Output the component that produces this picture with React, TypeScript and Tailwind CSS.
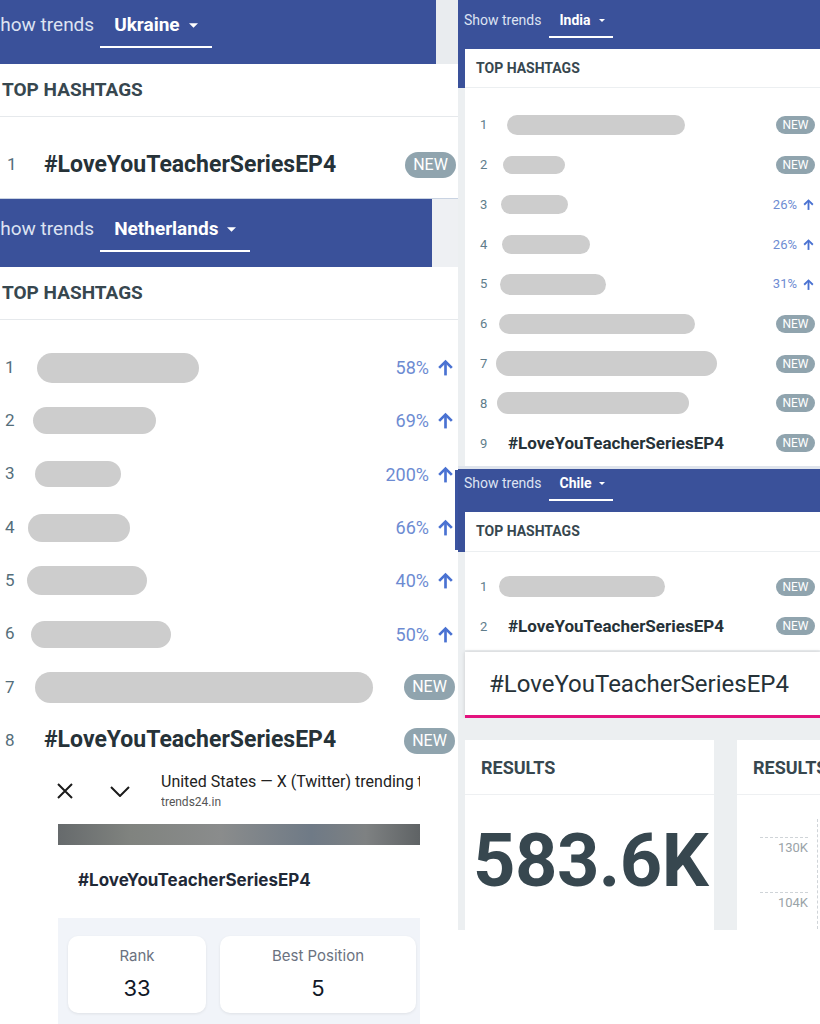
import { ReactNode } from 'react'

const nlRows = [
  { pill: 'w-[162px] h-[30px] ml-[13px]', pct: '58%' },
  { pill: 'w-[123px] h-[27px] ml-[9px]', pct: '69%' },
  { pill: 'w-[86px] h-[26px] ml-[11px]', pct: '200%' },
  { pill: 'w-[102px] h-[28px] ml-[4px]', pct: '66%' },
  { pill: 'w-[120px] h-[29px] ml-[3px]', pct: '40%' },
  { pill: 'w-[140px] h-[27px] ml-[7px]', pct: '50%' },
  { pill: 'w-[338px] h-[31px] ml-[11px]', pct: '' },
]

const indiaRows = [
  { pill: 'w-[178px] h-[20px] ml-[11px]', pct: '' },
  { pill: 'w-[62px] h-[18px] ml-[7px]', pct: '' },
  { pill: 'w-[67px] h-[19px] ml-[5px]', pct: '26%' },
  { pill: 'w-[88px] h-[19px] ml-[6px]', pct: '26%' },
  { pill: 'w-[106px] h-[21px] ml-[4px]', pct: '31%' },
  { pill: 'w-[196px] h-[20px] ml-[3px]', pct: '' },
  { pill: 'w-[221px] h-[25px] ml-[0px]', pct: '' },
  { pill: 'w-[192px] h-[22px] ml-[1px]', pct: '' },
]

function Caret({ className }: { className: string }) {
  return (
    <svg className={className} viewBox="0 0 10 5" fill="currentColor">
      <path d="M0 0h10L5 5z" />
    </svg>
  )
}

function UpArrow({ className }: { className: string }) {
  return (
    <svg className={className} viewBox="0 0 24 24" fill="none" stroke="currentColor" strokeWidth={3.4}>
      <path d="M12 22V5" />
      <path d="M4 12.5l8-8 8 8" />
    </svg>
  )
}

function BigNew() {
  return (
    <span className="w-[51px] h-[26px] rounded-full bg-[#90a4ae] text-white text-[16px] flex items-center justify-center">
      NEW
    </span>
  )
}

function SmallNew() {
  return (
    <span className="w-[39px] h-[18px] rounded-full bg-[#90a4ae] text-white text-[12px] flex items-center justify-center">
      NEW
    </span>
  )
}

function Pill({ className }: { className: string }) {
  return <span className={`block shrink-0 rounded-full bg-[#cdcdcd] ${className}`} />
}

function BigHeader({ country, top }: { country: string; top: string }) {
  return (
    <div className="flex items-start whitespace-nowrap">
      <span className={`-ml-[11px] text-[19px] leading-[22px] text-[#dde3f2] ${top}`}>Show trends</span>
      <div className={`ml-[6px] flex items-center pl-[14px] pr-[14px] pb-[10px] border-b-2 border-white ${top}`}>
        <span className="text-[19px] leading-[22px] font-bold text-white">{country}</span>
        <Caret className="ml-[9px] w-[9px] h-[5px] text-white" />
      </div>
    </div>
  )
}

function SmallHeader({ country, height, top }: { country: string; height: string; top: string }) {
  return (
    <div className={`flex items-start pl-[6px] whitespace-nowrap ${height}`}>
      <span className={`text-[14px] leading-[18px] text-[#dde3f2] ${top}`}>Show trends</span>
      <div className={`ml-[8px] flex items-center pl-[10px] pr-[8px] pb-[7px] border-b-2 border-white ${top}`}>
        <span className="text-[14px] leading-[18px] font-bold text-white">{country}</span>
        <Caret className="ml-[8px] w-[6px] h-[3px] text-white" />
      </div>
    </div>
  )
}

function SmallRow({ n, children, right }: { n: number; children: ReactNode; right: ReactNode }) {
  return (
    <div className="flex items-center h-[39.8px] pl-[15px] pr-[5px]">
      <span className="w-[16px] shrink-0 text-[13px] text-[#607d8b]">{n}</span>
      {children}
      <div className="ml-auto flex items-center">{right}</div>
    </div>
  )
}

function SmallPct({ pct }: { pct: string }) {
  return (
    <>
      <span className="text-[13px] text-[#6d8bd2]">{pct}</span>
      <UpArrow className="ml-[5px] w-[13px] h-[13px] text-[#4a72d2]" />
    </>
  )
}

export default function App() {
  return (
    <div className="w-[820px] h-[1024px] overflow-hidden flex bg-white font-[Roboto,sans-serif]">
      {/* left column */}
      <div className="w-[458px] shrink-0 flex flex-col overflow-hidden">
        {/* Ukraine */}
        <div className="h-[199px] flex flex-col border-b border-[#c9d3e2]">
          <div className="h-[64px] flex">
            <div className="w-[436px] bg-[#3a519a]">
              <BigHeader country="Ukraine" top="pt-[14px]" />
            </div>
            <div className="flex-1 bg-[#e9ecef]" />
          </div>
          <div className="flex-1 bg-white">
            <div className="h-[53px] flex items-center pl-[2px] border-b border-[#e6e9ec]">
              <span className="text-[19px] font-bold text-[#37474f]">TOP HASHTAGS</span>
            </div>
            <div className="pt-[23px]">
              <div className="h-[50px] flex items-center pr-[2px]">
                <span className="w-[24px] pl-[7px] text-[17px] text-[#546e7a]">1</span>
                <span className="ml-[20px] text-[23px] font-bold text-[#263238]">#LoveYouTeacherSeriesEP4</span>
                <div className="ml-auto">
                  <BigNew />
                </div>
              </div>
            </div>
          </div>
        </div>

        {/* Netherlands */}
        <div className="h-[561px] flex flex-col">
          <div className="h-[68px] flex">
            <div className="w-[432px] bg-[#3a519a]">
              <BigHeader country="Netherlands" top="pt-[19px]" />
            </div>
            <div className="flex-1 bg-[#eef0f3]" />
          </div>
          <div className="relative flex-1 bg-white overflow-hidden">
            <div className="h-[53px] flex items-center pl-[2px] border-b border-[#e6e9ec]">
              <span className="text-[19px] font-bold text-[#37474f]">TOP HASHTAGS</span>
            </div>
            <div className="pt-[21px]">
              {nlRows.map((row, i) => (
                <div key={i} className="h-[53.3px] flex items-center pr-[3px]">
                  <span className="w-[24px] pl-[5px] text-[17px] text-[#546e7a]">{i + 1}</span>
                  <Pill className={row.pill} />
                  <div className="ml-auto flex items-center">
                    {row.pct ? (
                      <>
                        <span className="text-[18px] text-[#6d8bd2]">{row.pct}</span>
                        <UpArrow className="ml-[7px] w-[19px] h-[19px] text-[#4a72d2]" />
                      </>
                    ) : (
                      <BigNew />
                    )}
                  </div>
                </div>
              ))}
              <div className="h-[53.3px] flex items-center pr-[3px]">
                <span className="w-[24px] pl-[5px] text-[17px] text-[#546e7a]">8</span>
                <span className="ml-[20px] text-[23px] font-bold text-[#263238]">#LoveYouTeacherSeriesEP4</span>
                <div className="ml-auto">
                  <BigNew />
                </div>
              </div>
            </div>
            <div className="absolute right-0 top-[203px] w-[3px] h-[80px] bg-[#3b54a0]" />
          </div>
        </div>

        {/* United States browser sheet */}
        <div className="flex-1 bg-white flex flex-col pl-[57px]">
          <div className="h-[62px] flex items-center">
            <svg className="w-[16px] h-[16px] text-[#1b1b1b]" viewBox="0 0 16 16" fill="none" stroke="currentColor" strokeWidth={2}>
              <path d="M1 1l14 14M15 1L1 15" />
            </svg>
            <svg className="ml-[37px] w-[20px] h-[11px] text-[#1b1b1b]" viewBox="0 0 20 11" fill="none" stroke="currentColor" strokeWidth={2}>
              <path d="M1 1l9 9 9-9" />
            </svg>
            <div className="ml-[31px] w-[259px] overflow-hidden whitespace-nowrap">
              <div className="text-[16px] leading-[20px] text-[#222]">United States — X (Twitter) trending topics</div>
              <div className="mt-[2px] text-[12px] leading-[16px] text-[#555]">trends24.in</div>
            </div>
          </div>
          <div className="mt-[2px] ml-[1px] w-[362px] h-[21px] bg-[linear-gradient(90deg,#666a6c_0%,#80837f_20%,#8a8c8c_45%,#6f7a86_70%,#7e8182_85%,#5f6365_100%)]" />
          <div className="mt-[24px] ml-[21px] h-[24px] flex items-center text-[17px] font-bold text-[#1f2937] font-[Inter,sans-serif]">
            #LoveYouTeacherSeriesEP4
          </div>
          <div className="mt-[25px] ml-[1px] w-[362px] flex-1 bg-[#f1f4f9] pt-[18px] pl-[10px] flex gap-[14px] font-[Inter,sans-serif]">
            <div className="w-[138px] h-[77px] bg-white rounded-[10px] shadow-[0_1px_3px_rgba(0,0,0,0.08)] flex flex-col items-center">
              <span className="mt-[10px] text-[15px] leading-[20px] text-[#6b7280]">Rank</span>
              <span className="mt-[10px] text-[22px] leading-[24px] text-[#111827]">33</span>
            </div>
            <div className="w-[196px] h-[77px] bg-white rounded-[10px] shadow-[0_1px_3px_rgba(0,0,0,0.08)] flex flex-col items-center">
              <span className="mt-[10px] text-[15px] leading-[20px] text-[#6b7280]">Best Position</span>
              <span className="mt-[10px] text-[22px] leading-[24px] text-[#111827]">5</span>
            </div>
          </div>
        </div>
      </div>

      {/* right column */}
      <div className="w-[362px] shrink-0 flex flex-col overflow-hidden">
        {/* India */}
        <div className="h-[466px] flex flex-col bg-[linear-gradient(to_bottom,#3a519a_88px,#eceff1_88px)]">
          <SmallHeader country="India" height="h-[49px]" top="pt-[11px]" />
          <div className="ml-[7px] flex-1 bg-white">
            <div className="h-[39px] flex items-center pl-[11px] border-b border-[#eceff1]">
              <span className="text-[14px] font-bold text-[#37474f]">TOP HASHTAGS</span>
            </div>
            <div className="pt-[17px]">
              {indiaRows.map((row, i) => (
                <SmallRow key={i} n={i + 1} right={row.pct ? <SmallPct pct={row.pct} /> : <SmallNew />}>
                  <Pill className={row.pill} />
                </SmallRow>
              ))}
              <SmallRow n={9} right={<SmallNew />}>
                <span className="ml-[12px] text-[17px] font-bold text-[#263238] whitespace-nowrap">#LoveYouTeacherSeriesEP4</span>
              </SmallRow>
            </div>
          </div>
        </div>
        <div className="h-[3px] bg-[#dfe4ec]" />

        {/* Chile */}
        <div className="h-[249px] flex flex-col bg-[linear-gradient(to_bottom,#3a519a_83px,#eceff1_83px)]">
          <SmallHeader country="Chile" height="h-[43px]" top="pt-[5px]" />
          <div className="ml-[7px] bg-white pb-[4px]">
            <div className="h-[40px] flex items-center pl-[11px] border-b border-[#eceff1]">
              <span className="text-[14px] font-bold text-[#37474f]">TOP HASHTAGS</span>
            </div>
            <div className="pt-[15px]">
              <SmallRow n={1} right={<SmallNew />}>
                <Pill className="w-[166px] h-[21px] ml-[3px]" />
              </SmallRow>
              <SmallRow n={2} right={<SmallNew />}>
                <span className="ml-[12px] text-[17px] font-bold text-[#263238] whitespace-nowrap">#LoveYouTeacherSeriesEP4</span>
              </SmallRow>
            </div>
          </div>
          <div className="mt-[2px] ml-[7px] h-[66px] bg-white border-b-[3px] border-[#e3137e] shadow-[0_0_4px_rgba(0,0,0,0.15)] flex items-center pl-[24px]">
            <span className="text-[24px] text-[#263238] whitespace-nowrap">#LoveYouTeacherSeriesEP4</span>
          </div>
        </div>

        {/* Results */}
        <div className="h-[212px] bg-[#eceff1] pt-[22px] flex">
          <div className="ml-[7px] w-[249px] shrink-0 bg-white flex flex-col">
            <div className="h-[55px] flex items-center pl-[16px] border-b border-[#eef0f2]">
              <span className="text-[18px] font-bold text-[#37474f]">RESULTS</span>
            </div>
            <span className="mt-[29px] pl-[8px] text-[74px] leading-[74px] font-bold text-[#37474f] tracking-[-0.5px]">583.6K</span>
          </div>
          <div className="ml-[23px] w-[200px] shrink-0 bg-white flex flex-col">
            <div className="h-[55px] flex items-center pl-[16px] border-b border-[#eef0f2] whitespace-nowrap">
              <span className="text-[18px] font-bold text-[#37474f]">RESULTS</span>
            </div>
            <div className="flex">
              <div className="ml-[23px] w-[48px] flex flex-col items-end">
                <div className="mt-[42px] w-full border-t border-dashed border-[#cfd4d8]" />
                <span className="mt-[2px] text-[13px] leading-[16px] text-[#9aa3a8]">130K</span>
                <div className="mt-[36px] w-full border-t border-dashed border-[#cfd4d8]" />
                <span className="mt-[2px] text-[13px] leading-[16px] text-[#9aa3a8]">104K</span>
              </div>
              <div className="ml-[9px] mt-[24px] h-[110px] border-l border-dashed border-[#cfd4d8]" />
            </div>
          </div>
        </div>
        <div className="flex-1 bg-white" />
      </div>
    </div>
  )
}
